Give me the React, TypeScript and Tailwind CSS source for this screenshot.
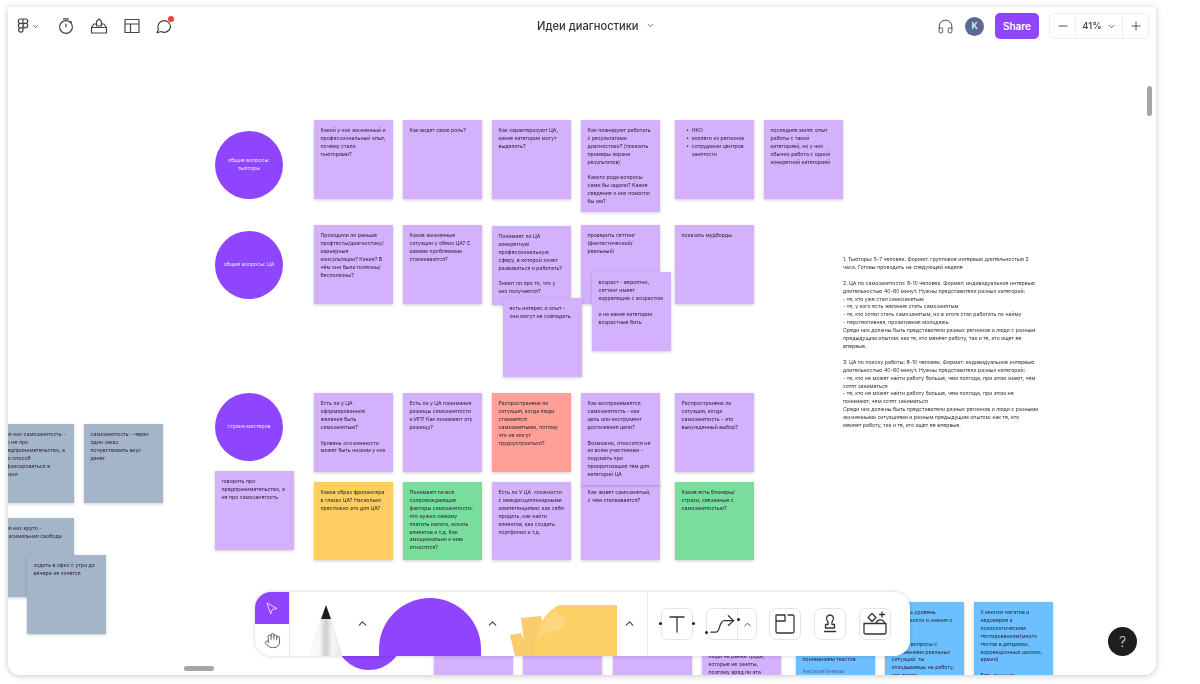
import { ChevronDown, ChevronUp, Hand, Headphones, Minus, Plus } from "lucide-react";

const PURPLE = "bg-[#d4b1fd]";
const GREEN = "bg-[#79dd9b]";
const GRAY = "bg-[#a5b5c8]";
const BLUE = "bg-[#6dc0ff]";

type Note = { pos: string; color: string; text: string; pad?: string; author?: string };

const notes: Note[] = [
  { pos: "left-[314px] top-[120px] h-[79px]", color: PURPLE, text: "Какой у них жизненный и\nпрофессиональный опыт,\nпочему стали\nтьюторами?" },
  { pos: "left-[403px] top-[120px] h-[79px]", color: PURPLE, text: "Как видят свою роль?" },
  { pos: "left-[492px] top-[120px] h-[79px]", color: PURPLE, text: "Как характеризуют ЦА,\nкакие категории могут\nвыделить?" },
  { pos: "left-[581px] top-[120px] h-[92px]", color: PURPLE, text: "Как планируют работать\nс результатами\nдиагностики? (показать\nпримеры экрана\nрезультатов)\n\nКакого рода вопросы\nсами бы задали? Какие\nсведения о них помогли\nбы им?" },
  { pos: "left-[675px] top-[120px] h-[79px]", color: PURPLE, text: "   •  НКО\n   •  коллеги из регионов\n   •  сотрудники центров\n       занятости" },
  { pos: "left-[764px] top-[120px] h-[79px]", color: PURPLE, text: "последняя миля: опыт\nработы с такой\nкатегорией, но у них\nобычно работа с одной\nконкретной категорией" },
  { pos: "left-[314px] top-[225px] h-[79px]", color: PURPLE, text: "Проходили ли раньше\nпрофтесты/диагностику/\nкарьерные\nконсультации? Какие? В\nчём они были полезны/\nбесполезны?" },
  { pos: "left-[403px] top-[225px] h-[79px]", color: PURPLE, text: "Какие жизненные\nситуации у обеих ЦА? С\nкакими проблемами\nсталкиваются?" },
  { pos: "left-[492px] top-[226px] h-[79px]", color: PURPLE, text: "Понимает ли ЦА\nконкретную\nпрофессиональную\nсферу, в которой хочет\nразвиваться и работать?\n\nЗнают ли про то, что у\nних получается?" },
  { pos: "left-[581px] top-[225px] h-[79px]", color: PURPLE, text: "проверить сеттинг\n(фантастический/\nреальный)" },
  { pos: "left-[675px] top-[225px] h-[79px]", color: PURPLE, text: "показать мудборды" },
  { pos: "left-[592px] top-[272px] h-[79px]", color: PURPLE, text: "возраст - вероятно,\nсеттинг имеет\nкорреляцию с возрастом\n\nи на какие категории\nвозрастные бить" },
  { pos: "left-[503px] top-[298px] h-[79px]", color: PURPLE, text: "есть интерес и опыт -\nони могут не совпадать" },
  { pos: "left-[314px] top-[393px] h-[79px]", color: PURPLE, text: "Есть ли у ЦА\nоформированное\nжелание быть\nсамозанятым?\n\nУровень осознанности\nможет быть низким у них" },
  { pos: "left-[403px] top-[393px] h-[79px]", color: PURPLE, text: "Есть ли у ЦА понимание\nразницы самозанятости\nи ИП? Как понимают эту\nразницу?" },
  { pos: "left-[492px] top-[393px] h-[79px]", color: "bg-[#ffa096]", text: "Распространена ли\nситуация, когда люди\nстановятся\nсамозанятыми, потому\nчто не могут\nтрудоустроиться?" },
  { pos: "left-[675px] top-[393px] h-[79px]", color: PURPLE, text: "Распространена ли\nситуация, когда\nсамозанятость - это\nвынужденный выбор?" },
  { pos: "left-[314px] top-[482px] h-[78px]", color: "bg-[#ffcd62]", text: "Каков образ фрилансера\nв глазах ЦА? Насколько\nпрестижно это для ЦА?" },
  { pos: "left-[403px] top-[482px] h-[78px]", color: GREEN, text: "Понимают ли все\nсопровождающие\nфакторы самозанятости:\nчто нужно самому\nплатить налоги, искать\nклиентов и т.д. Как\nэмоционально к ним\nотносятся?" },
  { pos: "left-[492px] top-[482px] h-[78px]", color: PURPLE, text: "Есть ли У ЦА  сложности\nс междисциплинарными\nкомпетенциями: как себя\nпродать, как найти\nклиентов, как создать\nпортфолио и т.д." },
  { pos: "left-[581px] top-[482px] h-[78px]", color: PURPLE, text: "Как живет самозанятый,\nс чем сталкивается?" },
  { pos: "left-[581px] top-[393px] h-[92px]", color: PURPLE, text: "Как воспринимается\nсамозанятость - как\nцель или инструмент\nдостижения цели?\n\nВозможно, относится не\nко всем участникам -\nподумать при\nприоритизацию тем для\nкатегорий ЦА" },
  { pos: "left-[675px] top-[482px] h-[78px]", color: GREEN, text: "Какие есть блокеры/\nстрахи, связанные с\nсамозанятостью?" },
  { pos: "left-[215px] top-[471px] h-[79px]", color: PURPLE, text: "говорить про\nпредпринимательство, а\nне про самозанятость" },
  { pos: "left-[-5px] top-[424px] h-[79px]", color: GRAY, text: "Для них самозанятость -\nэто не про\nпредпринимательство, а\nпро способ\nзафиксироваться в\nжизни" },
  { pos: "left-[84px] top-[424px] h-[79px]", color: GRAY, text: "самозанятость - через\nодин заказ\nпочувствовать вкус\nденег" },
  { pos: "left-[-5px] top-[518px] h-[79px]", color: GRAY, text: "Для них круто -\nмаксимальная свобода" },
  { pos: "left-[27px] top-[555px] h-[79px]", color: GRAY, text: "ходить в офис с утра до\nвечера не хочется" },
  { pos: "left-[434px] top-[602px] h-[79px]", color: PURPLE, text: "" },
  { pos: "left-[523px] top-[602px] h-[79px]", color: PURPLE, text: "" },
  { pos: "left-[613px] top-[602px] h-[79px]", color: PURPLE, text: "" },
  { pos: "left-[702px] top-[602px] h-[79px]", color: PURPLE, pad: "pt-[11.500px]", text: "\n\n\n\n\nлюди на рынке труда,\nкоторые не заняты,\nпоэтому вряд ли эта" },
  { pos: "left-[796px] top-[602px] h-[79px]", color: BLUE, text: "\n\n\n\n\n\nпониманием текстов", author: "Анастасия Белякова" },
  { pos: "left-[885px] top-[602px] h-[79px]", color: BLUE, text: "Оценить уровень\nграмотности и знания о\nрынке\n\nЗадать вопросы с\nпониманием реальных\nситуаций: ты\nопаздываешь на работу,\nчто делать" },
  { pos: "left-[974px] top-[602px] h-[79px]", color: BLUE, text: "У многих негатив и\nнедоверие к\nпсихологическим\nтестированиям(много\nтестов в детдомах,\nкоррекционных школах,\nармии)\n\nЕсть ли у них" },
];

const circles = [
  { pos: "top-[131px] left-[215px]", text: "общие вопросы:\nтьюторы" },
  { pos: "top-[231px] left-[215px]", text: "общие вопросы: ЦА" },
  { pos: "top-[393px] left-[215px]", text: "страна мастеров" },
  { pos: "top-[602px] left-[335px]", text: "" },
];

const brief = `1. Тьюторы: 5-7 человек. Формат: групповое интервью длительностью 2
часа. Готовы проводить на следующей неделе

2. ЦА по самозанятости: 8-10 человек. Формат: индивидуальное интервью
длительностью 40-60 минут. Нужны представители разных категорий:
- те, кто уже стал самозанятым
- те, у кого есть желание стать самозанятым
- те, кто хотел стать самозанятым, но в итоге стал работать по найму
- перспективная, проактивная молодежь
Среди них должны быть представители разных регионов и люди с разным
предыдущим опытом: как те, кто меняет работу, так и те, кто ищет ее
впервые.

3. ЦА по поиску работы: 8-10 человек. Формат: индивидуальное интервью
длительностью 40-60 минут. Нужны представители разных категорий:
- те, кто не может найти работу больше, чем полгода, при этом знают, чем
хотят заниматься
- те, кто не может найти работу больше, чем полгода, при этом не
понимают, чем хотят заниматься
Среди них должны быть представители разных регионов и люди с разными
жизненными ситуациями и разным предыдущим опытом: как те, кто
меняет работу, так и те, кто ищет ее впервые.`;

function TopIcon({ children, w = 18 }: { children: React.ReactNode; w?: number }) {
  return (
    <svg width={w} height="18" viewBox={`0 0 ${w} 18`} fill="none" stroke="#444" strokeWidth="1.2" strokeLinejoin="round" strokeLinecap="round">
      {children}
    </svg>
  );
}

function TopBar() {
  return (
    <div className="relative z-10 flex h-[38px] items-center font-['Inter',sans-serif]">
      {/* Left tools */}
      <div className="flex w-[529px] items-center pl-[8px]">
        <TopIcon w={14}>
          <path d="M7 2H4.5a2.2 2.2 0 0 0 0 4.4H7zM7 2h2.5a2.2 2.2 0 0 1 0 4.4H7zM7 6.4H4.5a2.2 2.2 0 0 0 0 4.4H7zM7 10.8H4.5a2.2 2.2 0 1 0 2.5 2.2zM11.7 8.6a2.2 2.2 0 1 1-4.7 0 2.2 2.2 0 0 1 4.7 0z" />
        </TopIcon>
        <ChevronDown size={9} color="#444" className="ml-[1px]" strokeWidth={2} />
        <div className="ml-[17px]">
          <TopIcon>
            <circle cx="9" cy="10" r="6.4" />
            <path d="M6.5 1.8h5M9 7v3M13.5 4.5l.8.8" />
          </TopIcon>
        </div>
        <div className="ml-[15px]">
          <TopIcon>
            <path d="M1.500 10.500L4 7h3M16.500 10.500L14 7h-3M1.500 10.500V16h15v-5.500zM1.500 10.500h15M6.500 9V4.500L9 2l2.500 2.500V9z" />
          </TopIcon>
        </div>
        <div className="ml-[15px]">
          <TopIcon>
            <path d="M2 2.500h14v13H2zM2 7h14M7.500 7v8.500" />
          </TopIcon>
        </div>
        <div className="relative ml-[14px]">
          <TopIcon>
            <path d="M15.500 9a6.300 6.300 0 0 1-9.300 5.500L2 15.800l1.400-3.600A6.300 6.300 0 1 1 15.500 9z" />
          </TopIcon>
          <span className="absolute -right-[1px] -top-[1px] h-[6px] w-[6px] rounded-full bg-[#ff3b2f]" />
        </div>
      </div>

      {/* Title */}
      <div className="flex items-center gap-[7px]">
        <span className="text-[11.100px] font-medium text-[#333]">Идеи диагностики</span>
        <ChevronDown size={9} color="#444" strokeWidth={2} />
      </div>

      {/* Right tools */}
      <div className="ml-auto flex items-center pr-[7px]">
        <Headphones size={17} color="#444" strokeWidth={1.3} />
        <div className="ml-[11px] flex h-[19px] w-[19px] items-center justify-center rounded-full bg-[#5a6b8f] text-[9px] font-medium text-white">K</div>
        <button className="ml-[11px] h-[26px] w-[44px] rounded-[5px] bg-[#8f44fd] text-[10px] font-semibold text-white">Share</button>
        <div className="ml-[10px] flex h-[26px] w-[100px] items-center rounded-[5px] border border-[#eeeeee] text-[#444]">
          <div className="flex h-full w-[26px] items-center justify-center border-r border-[#eeeeee]">
            <Minus size={14} strokeWidth={1.6} />
          </div>
          <div className="flex h-full w-[47px] items-center justify-center gap-[5px] border-r border-[#eeeeee] text-[9.500px] font-medium">
            41%
            <ChevronDown size={9} strokeWidth={2} />
          </div>
          <div className="flex h-full flex-1 items-center justify-center">
            <Plus size={14} strokeWidth={1.6} />
          </div>
        </div>
      </div>
    </div>
  );
}

function Pencil() {
  return (
    <svg width="34" height="52" viewBox="0 0 34 52">
      <defs>
        <linearGradient id="pencil-body" x1="0" x2="1" y1="0" y2="0">
          <stop offset="0" stopColor="#ffffff" />
          <stop offset="0.3" stopColor="#f6f6f6" />
          <stop offset="0.5" stopColor="#cccccc" />
          <stop offset="0.7" stopColor="#f6f6f6" />
          <stop offset="1" stopColor="#e8e8e8" />
        </linearGradient>
      </defs>
      <path d="M12 15h10l11 37H1z" fill="url(#pencil-body)" stroke="#e0e0e0" strokeWidth="0.5" />
      <path d="M17 1l5 14H12z" fill="#1c1c1c" />
    </svg>
  );
}

function Stickies() {
  return (
    <svg width="108" height="51" viewBox="0 0 108 51">
      <path d="M0 30l11-2 9 23H5z" fill="#f7cb6e" />
      <path d="M11 13l20-2 10 40H16z" fill="#f9cd6c" />
      <path d="M24 51C24 30 30 10 49 0h58v51z" fill="#fdd066" />
      <path d="M26 35C29 20 36 9 46 6c0 4 3 6 11 7-3 6-5 10-8 12-8 0-16 4-23 10z" fill="#fcd680" />
    </svg>
  );
}

function ToolBox({ children }: { children: React.ReactNode }) {
  return (
    <div className="flex h-[32px] w-[32px] items-center justify-center rounded-[7px] border border-[#e4e4e4]">
      {children}
    </div>
  );
}

function Toolbar() {
  const stroke = { fill: "none", stroke: "#333", strokeWidth: 1.3, strokeLinecap: "round", strokeLinejoin: "round" } as const;
  return (
    <div className="absolute left-[247px] top-[585px] z-20 flex h-[64px] w-[655px] overflow-hidden rounded-2xl bg-white shadow-[0_0_4px_rgba(0,0,0,0.18)]">
      {/* Select / hand */}
      <div className="flex w-[35px] shrink-0 flex-col border-r border-[#e8e8e8]">
        <div className="flex h-[32px] items-center justify-center bg-[#8f44fd]">
          <svg width="14" height="14" viewBox="0 0 14 14" fill="none" stroke="#e4d2ff" strokeWidth="1" strokeLinejoin="round">
            <path d="M2 2l10 5.500-4.700 1L5.600 13z" />
          </svg>
        </div>
        <div className="flex h-[32px] items-center justify-center">
          <Hand size={17} color="#444" strokeWidth={1.2} />
        </div>
      </div>

      {/* Drawing tools */}
      <div className="flex w-[358px] shrink-0 items-end border-r border-[#e8e8e8]">
        <div className="ml-[19px]">
          <Pencil />
        </div>
        <ChevronUp size={13} color="#444" strokeWidth={2.2} className="mb-[26px] ml-[13px]" />
        <div className="ml-[10px] h-[58px] w-[102px] rounded-t-full bg-[#8f44fd]" />
        <ChevronUp size={13} color="#444" strokeWidth={2.2} className="mb-[26px] ml-[5px]" />
        <div className="ml-[11px] flex h-[51px]">
          <Stickies />
        </div>
        <ChevronUp size={13} color="#444" strokeWidth={2.2} className="mb-[26px] ml-[5px]" />
      </div>

      {/* Insert tools */}
      <div className="flex flex-1 items-center pl-[13px]">
        <div className="relative">
          <ToolBox>
            <svg width="20" height="20" viewBox="0 0 20 20" {...stroke}>
              <path d="M3 3h14M10 3v15" />
            </svg>
          </ToolBox>
          <span className="absolute left-[-2px] top-[14px] h-[3px] w-[3px] rounded-full bg-[#222]" />
          <span className="absolute right-[-2px] top-[14px] h-[3px] w-[3px] rounded-full bg-[#222]" />
        </div>
        <div className="relative ml-[13px] flex h-[32px] w-[51px] items-center rounded-[7px] border border-[#e4e4e4]">
          <svg width="31" height="30" viewBox="0 0 31 30" className="shrink-0 border-r border-[#e4e4e4]" {...stroke}>
            <path d="M4 23.500h5c5 0 3-12 9-12h9M22 6.500l5.500 5-5.500 5" />
          </svg>
          <ChevronUp size={11} color="#444" strokeWidth={2} className="ml-[4px]" />
          <span className="absolute left-[-2px] top-[22px] h-[3px] w-[3px] rounded-full bg-[#222]" />
          <span className="absolute left-[30px] top-[9px] h-[3px] w-[3px] rounded-full bg-[#222]" />
        </div>
        <div className="ml-[12px]">
          <ToolBox>
            <svg width="24" height="24" viewBox="0 0 24 24" {...stroke}>
              <path d="M15 3h4.500A1.500 1.500 0 0 1 21 4.500v15a1.500 1.500 0 0 1-1.500 1.500h-15A1.500 1.500 0 0 1 3 19.500V9h9V3H3v6" />
            </svg>
          </ToolBox>
        </div>
        <div className="ml-[13px]">
          <ToolBox>
            <svg width="24" height="24" viewBox="0 0 24 24" {...stroke}>
              <path d="M12 3a3.500 3.500 0 0 0-2.500 6c.8 1 .8 2 .5 3.500H7.500V16h9v-3.500H14c-.3-1.500-.3-2.500.5-3.500A3.500 3.500 0 0 0 12 3zM6.500 19.500h11" />
            </svg>
          </ToolBox>
        </div>
        <div className="ml-[13px]">
          <ToolBox>
            <svg width="28" height="28" viewBox="0 0 28 28" {...stroke}>
              <path d="M3 13.500h22v9a1.500 1.500 0 0 1-1.500 1.500h-19A1.500 1.500 0 0 1 3 22.500zM15 13.500a4.500 4.500 0 0 1 8.500-1M11 3.500l4 4-4 4-4-4zM21 2v5M18.500 4.500h5" />
            </svg>
          </ToolBox>
        </div>
      </div>
    </div>
  );
}

export default function App() {
  return (
    <div className="h-[684px] w-[1200px] overflow-hidden bg-white pl-[8px] pt-[7px]">
      <div className="relative h-[668px] w-[1148px] overflow-hidden rounded-b-[12px] bg-white shadow-[0_1px_6px_rgba(0,0,0,0.22)] blur-[0.4px]">
        <TopBar />

        {/* Board: items sit at their canvas coordinates */}
        <div className="absolute left-[-8px] top-[-7px] h-[684px] w-[1200px] font-['Inter',sans-serif] text-[5.200px] leading-[7.900px]">
          {circles.map((c) => (
            <div key={c.pos} className={`absolute flex h-[68px] w-[68px] items-center justify-center whitespace-pre-line rounded-full bg-[#8f44fd] text-center text-[#efe6ff] ${c.pos}`}>
              {c.text}
            </div>
          ))}
          {notes.map((n) => (
            <div key={n.pos} className={`absolute w-[79px] whitespace-pre px-[6.500px] text-[#2a2438] shadow-[0_1px_3px_rgba(0,0,0,0.2)] ${n.pad ?? "pt-[7px]"} ${n.pos} ${n.color}`}>
              {n.text}
              {n.author && <div className="mt-[4px] text-[4.200px] text-[#3f5f80]">{n.author}</div>}
            </div>
          ))}
          <div className="absolute left-[843px] top-[256px] whitespace-pre text-[#333]">{brief}</div>

          {/* Scrollbars */}
          <div className="absolute left-[1147px] top-[86px] h-[30px] w-[5px] rounded-full bg-[#a6a6a6]" />
          <div className="absolute left-[184px] top-[666px] h-[5px] w-[30px] rounded-full bg-[#a6a6a6]" />

          {/* Help */}
          <div className="absolute left-[1108px] top-[627px] z-20 flex h-[29px] w-[29px] items-center justify-center rounded-full bg-[#1e1e1e] text-[14px] font-light text-[#dddddd]">?</div>
        </div>

        <Toolbar />
      </div>
    </div>
  );
}
